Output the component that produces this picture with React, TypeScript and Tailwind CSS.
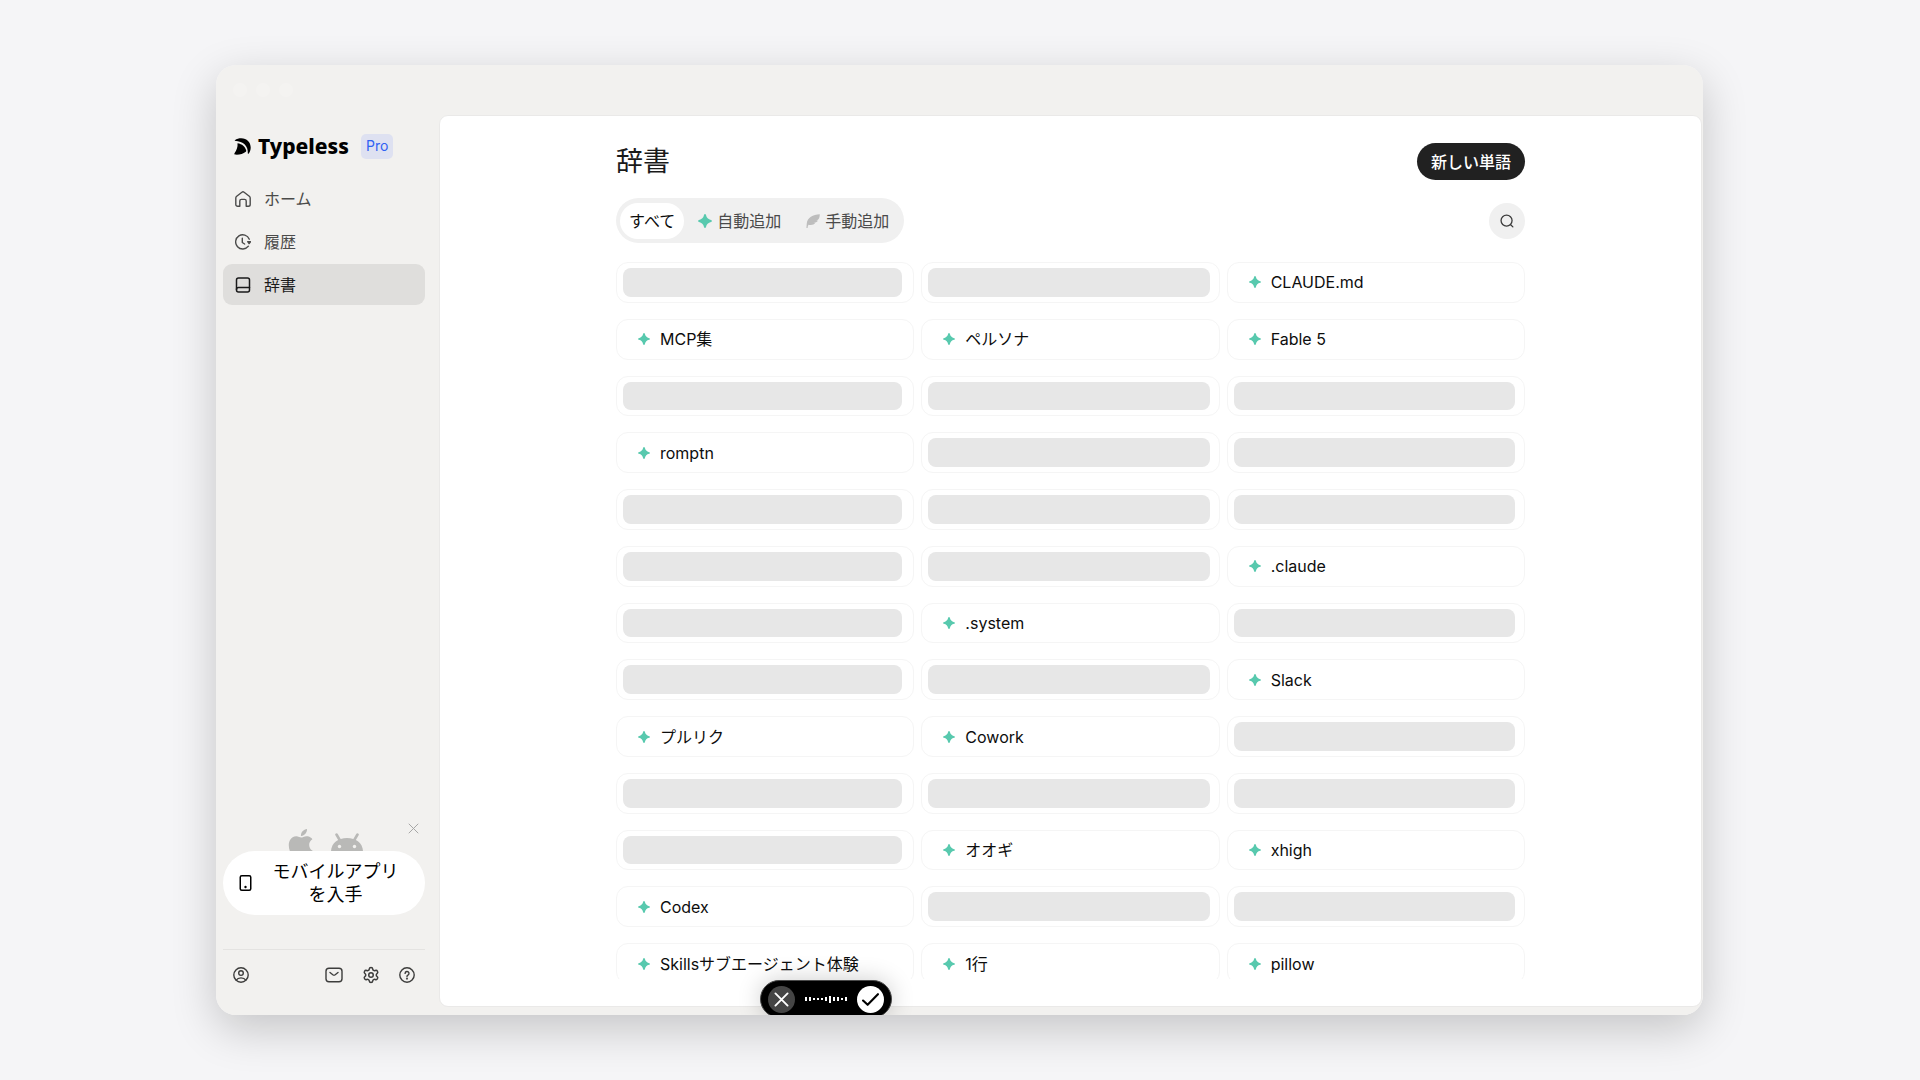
import { useState } from "react";
import clsx from "clsx";
import { Settings } from "lucide-react";

interface IconProps {
    className?: string;
}

interface Word {
    text: string;
}

// null entries are words whose text is hidden
const rows: (Word | null)[][] = [
    [null, null, { text: "CLAUDE.md" }],
    [{ text: "MCP集" }, { text: "ペルソナ" }, { text: "Fable 5" }],
    [null, null, null],
    [{ text: "romptn" }, null, null],
    [null, null, null],
    [null, null, { text: ".claude" }],
    [null, { text: ".system" }, null],
    [null, null, { text: "Slack" }],
    [{ text: "プルリク" }, { text: "Cowork" }, null],
    [null, null, null],
    [null, { text: "オオギ" }, { text: "xhigh" }],
    [{ text: "Codex" }, null, null],
    [{ text: "Skillsサブエージェント体験" }, { text: "1行" }, { text: "pillow" }],
];

const strokeProps = {
    viewBox: "0 0 16 16",
    fill: "none",
    stroke: "currentColor",
    strokeWidth: 1.4,
    strokeLinecap: "round" as const,
    strokeLinejoin: "round" as const,
    "aria-hidden": true,
};

function LogoMark({ className }: IconProps) {
    return (
        <svg viewBox="0 0 17 17" className={className} fill="currentColor" aria-hidden="true">
            <path d="M.8 2.200C2.800.8 4.900.2 7.200.2c5.600 0 9.500 4 9.500 9.300 0 2.300-.7 4.400-2 6.200l-.9-.1C14.500 8 9.500 3.300.8 2.700Z" />
            <path d="M3.500 5.200c4.600.7 7.900 3.500 8.700 7.400.1.500 0 .8-.4 1.100-2.800 2.200-6.400 3.200-10.600 2.900-.9-.1-1-.7-.7-1.300C2.500 12 4 9 3.500 5.200Z" />
        </svg>
    );
}

function HomeIcon({ className }: IconProps) {
    return (
        <svg {...strokeProps} className={className}>
            <path d="M.8 7.100c0-.8.3-1.400.9-1.900L6.900 1.200a1.800 1.800 0 0 1 2.200 0l5.200 4c.6.5.9 1.100.9 1.900v6.300a1.800 1.800 0 0 1-1.800 1.800h-2.200V10a1.600 1.600 0 0 0-1.600-1.600H6.400A1.600 1.600 0 0 0 4.800 10v5.200H2.600A1.800 1.800 0 0 1 .8 13.400Z" />
        </svg>
    );
}

function HistoryIcon({ className }: IconProps) {
    return (
        <svg {...strokeProps} className={className}>
            <path d="M13.400 12.200A7.100 7.100 0 1 1 14.300 5.200" />
            <path d="M7.300 4.300v4.200l2.300 1.500" />
            <path d="M12.700 7.700h2.800l-1.400 1.900Z" fill="currentColor" />
        </svg>
    );
}

function BookIcon({ className }: IconProps) {
    return (
        <svg {...strokeProps} strokeWidth={1.5} className={className}>
            <rect x="1.500" y=".9" width="13" height="14.200" rx="2" />
            <path d="M1.500 12.600c0-1.400.7-2.100 2-2.100h11" />
        </svg>
    );
}

function SparkIcon({ className }: IconProps) {
    return (
        <svg viewBox="0 0 14 14" className={className} fill="#58c9ae" aria-hidden="true">
            <path d="M7 0c.5 0 .8.4 1 1 .7 2.900 2.100 4.300 5 5 .6.2 1 .5 1 1s-.4.8-1 1c-2.900.7-4.300 2.100-5 5-.2.6-.5 1-1 1s-.8-.4-1-1c-.7-2.900-2.100-4.300-5-5-.6-.2-1-.5-1-1s.4-.8 1-1c2.900-.7 4.300-2.100 5-5 .2-.6.500-1 1-1Z" />
        </svg>
    );
}

function FeatherIcon({ className }: IconProps) {
    return (
        <svg viewBox="0 0 14 14" className={className} fill="#bdbdbd" aria-hidden="true">
            <path d="M13.800.2C7 .6 1.400 3.600.8 9.200L.4 14h1.200c0-1.200.3-2.200.9-3.200 1.700.4 3.900.3 5.500-.5l1.200-1.200-2-.2c2.200-.2 3.900-1 4.900-2.200l-1.700-.3c1.500-.4 2.400-1.200 2.800-2.300.4-1.200.6-2.500.6-3.900Z" />
        </svg>
    );
}

function SearchIcon({ className }: IconProps) {
    return (
        <svg {...strokeProps} strokeWidth={1.5} className={className}>
            <circle cx="7.500" cy="7.500" r="6.300" />
            <path d="m12.200 12.200 2.500 2.500" />
        </svg>
    );
}

function CloseIcon({ className }: IconProps) {
    return (
        <svg {...strokeProps} className={className}>
            <path d="M1.500 1.500l13 13M14.500 1.500l-13 13" />
        </svg>
    );
}

function AppleIcon({ className }: IconProps) {
    return (
        <svg viewBox="0 0 24 24" className={className} fill="#b9b9b7" aria-hidden="true">
            <path d="M12.152 6.896c-.948 0-2.415-1.078-3.960-1.040-2.040.027-3.910 1.183-4.961 3.014-2.117 3.675-.546 9.103 1.519 12.090 1.013 1.454 2.208 3.090 3.792 3.039 1.520-.065 2.090-.987 3.935-.987 1.831 0 2.350.987 3.960.948 1.637-.026 2.676-1.480 3.676-2.948 1.156-1.688 1.636-3.325 1.662-3.415-.039-.013-3.182-1.221-3.220-4.857-.026-3.040 2.480-4.494 2.597-4.559-1.429-2.090-3.623-2.324-4.390-2.376-2-.156-3.675 1.090-4.610 1.090zM15.530 3.830c.843-1.012 1.400-2.427 1.245-3.830-1.207.052-2.662.805-3.532 1.818-.780.896-1.454 2.338-1.273 3.714 1.338.104 2.715-.688 3.559-1.701" />
        </svg>
    );
}

function AndroidIcon({ className }: IconProps) {
    return (
        <svg viewBox="0 0 32 18" className={className} aria-hidden="true">
            <path d="M5.500 1.500 9 7.500M26.500 1.500 23 7.500" stroke="#b9b9b7" strokeWidth="2.600" strokeLinecap="round" />
            <path d="M0 18C.5 10 7 5 16 5s15.500 5 16 13Z" fill="#b9b9b7" />
            <circle cx="8.500" cy="13.500" r="1.700" fill="#f2f1ef" />
            <circle cx="23.500" cy="13.500" r="1.700" fill="#f2f1ef" />
        </svg>
    );
}

function PhoneIcon({ className }: IconProps) {
    return (
        <svg viewBox="0 0 12 16" className={className} fill="none" stroke="currentColor" strokeWidth="1.500" aria-hidden="true">
            <rect x=".75" y=".75" width="10.500" height="14.500" rx="1.500" />
            <circle cx="6" cy="12" r="1.200" fill="currentColor" stroke="none" />
        </svg>
    );
}

function UserIcon({ className }: IconProps) {
    return (
        <svg {...strokeProps} className={className}>
            <circle cx="8" cy="8" r="7.200" />
            <circle cx="8" cy="6.100" r="2.300" />
            <path d="M3.200 13.200C4.300 11.500 5.800 10.900 8 10.900s3.700.6 4.800 2.300" />
        </svg>
    );
}

function MailIcon({ className }: IconProps) {
    return (
        <svg viewBox="0 0 18 16" className={className} fill="none" stroke="currentColor" strokeWidth="1.400" strokeLinecap="round" strokeLinejoin="round" aria-hidden="true">
            <rect x="1" y="1.300" width="16" height="13.400" rx="3" />
            <path d="M5 5.500 7.800 7.700a2 2 0 0 0 2.400 0L13 5.500" />
        </svg>
    );
}

function HelpIcon({ className }: IconProps) {
    return (
        <svg {...strokeProps} className={className}>
            <circle cx="8" cy="8" r="7.200" />
            <path d="M6.100 6.400a1.950 1.950 0 1 1 2.900 1.700c-.7.400-1 .7-1 1.300" />
            <circle cx="8" cy="11.600" r=".4" fill="currentColor" />
        </svg>
    );
}

const navItems = [
    { label: "ホーム", icon: HomeIcon },
    { label: "履歴", icon: HistoryIcon },
    { label: "辞書", icon: BookIcon },
];

function Sidebar() {
    return (
        <aside className="flex w-[223px] shrink-0 flex-col pr-[14px] pl-[7px]">
            <div className="mt-[18px] flex h-[26px] items-center pl-[11px]">
                <LogoMark className="size-[17px]" />
                <span className="ml-[7px] font-['Noto_Sans',sans-serif] text-[21px] leading-6 font-extrabold text-black">Typeless</span>
                <span className="ml-3 flex h-[25px] items-center rounded-[5px] bg-[#dee1f1] px-[5px] text-sm text-[#2f62f3]">Pro</span>
            </div>
            <nav className="mt-[19px] flex flex-col gap-[2px]">
                {navItems.map(({ label, icon: Icon }) => {
                    const active = label === "辞書";
                    return (
                        <a
                            key={label}
                            href="#"
                            className={clsx(
                                "flex h-[41px] items-center gap-[13px] rounded-[9px] pl-3 text-base",
                                active ? "bg-[#dfdedc] text-[#1a1a1a]" : "text-[#4b4b4a]"
                            )}
                        >
                            <Icon className="size-4" />
                            <span>{label}</span>
                        </a>
                    );
                })}
            </nav>

            <div className="relative mt-auto flex h-7 items-end justify-center gap-[15px] overflow-hidden">
                <AppleIcon className="-mb-2 size-[30px] shrink-0" />
                <AndroidIcon className="h-[18px] w-8 shrink-0" />
                <button aria-label="閉じる" className="absolute top-0 right-[6px] text-[#a3a3a2]">
                    <CloseIcon className="size-[11px]" />
                </button>
            </div>
            <button className="flex h-16 items-center rounded-full bg-white pl-4 text-lg leading-[23px] text-black">
                <PhoneIcon className="h-4 w-[13px] shrink-0" />
                <span className="flex-1 pr-[17px] pl-[11px]">
                    モバイルアプリ
                    <br />
                    を入手
                </span>
            </button>
            <div className="mt-[34px] mb-[31px] flex items-center gap-[19px] border-t border-[#e4e3e1] px-[10px] pt-4 text-[#3d3d3c]">
                <button aria-label="アカウント" className="mr-auto">
                    <UserIcon className="size-4" />
                </button>
                <button aria-label="メール">
                    <MailIcon className="h-4 w-[18px]" />
                </button>
                <button aria-label="設定">
                    <Settings className="size-[18px]" strokeWidth={2} />
                </button>
                <button aria-label="ヘルプ">
                    <HelpIcon className="size-4" />
                </button>
            </div>
        </aside>
    );
}

function WordCard({ word, first }: { word: Word | null; first: boolean }) {
    if (!word) {
        return (
            <li className={clsx("rounded-xl border border-[#f5f5f5] py-[5px] pl-[6px]", first ? "pr-[11px]" : "pr-[9px]")}>
                <div className="h-full rounded-lg bg-[#e7e7e7]" />
            </li>
        );
    }
    return (
        <li className="flex items-center gap-[10px] rounded-xl border border-[#f5f5f5] pl-[21px] text-base text-[#0d0d0d]">
            <SparkIcon className="size-3 shrink-0" />
            <span className="whitespace-nowrap">{word.text}</span>
        </li>
    );
}

const filters = [
    { label: "すべて", icon: null },
    { label: "自動追加", icon: SparkIcon },
    { label: "手動追加", icon: FeatherIcon },
];

const levels = ["h-1", "h-1", "h-[2px]", "h-[2px]", "h-[2px]", "h-1", "h-[7px]", "h-1", "h-1", "h-[2px]", "h-1"];

function Recorder() {
    return (
        <div className="absolute bottom-[-3px] left-[544px] flex h-[38px] w-[132px] items-center justify-between rounded-full border border-[#4a4a4a] bg-black px-[7px] shadow-[0_0_24px_rgba(0,0,0,0.2)]">
            <button aria-label="キャンセル" className="flex size-[27px] items-center justify-center rounded-full bg-[#454545] text-white">
                <CloseIcon className="size-[15px] stroke-2" />
            </button>
            <div className="flex items-center gap-[2px]">
                {levels.map((h, i) => (
                    <span key={i} className={clsx("w-[2px] bg-white", h)} />
                ))}
            </div>
            <button aria-label="確定" className="flex size-[27px] items-center justify-center rounded-full bg-white text-black">
                <svg {...strokeProps} className="size-[17px] stroke-2">
                    <path d="m1 9 4.300 4L15 3" />
                </svg>
            </button>
        </div>
    );
}

export default function App() {
    const [filter, setFilter] = useState("すべて");

    return (
        <div className="min-h-screen bg-[#f5f5f7] py-[65px] pr-[217px] pl-[216px] font-[Inter,'Noto_Sans_CJK_JP',sans-serif]">
            <div className="rounded-[20px] shadow-[0_14px_45px_rgba(0,0,0,0.2)]">
                <div className="relative flex flex-col overflow-hidden rounded-[20px] bg-[#f2f1ef]">
                    <div className="flex h-[50px] items-center gap-[9px] pl-[17px]">
                        <span className="size-[14px] rounded-full bg-[#f4f3f1]" />
                        <span className="size-[14px] rounded-full bg-[#f4f3f1]" />
                        <span className="size-[14px] rounded-full bg-[#f4f3f1]" />
                    </div>
                    <div className="flex">
                        <Sidebar />
                        <main className="mr-px mb-2 flex flex-1 justify-center rounded-[9px] border border-[#eae9e8] bg-white px-8 pb-[27px]">
                            <div className="w-full max-w-[909px]">
                                <div className="mt-[27px] flex h-[37px] items-center justify-between">
                                    <h1 className="text-[27px] leading-9 text-[#1a1a1a]">辞書</h1>
                                    <button className="h-[37px] rounded-full bg-[#212121] px-[14px] text-base font-medium text-white">新しい単語</button>
                                </div>
                                <div className="mt-[18px] flex items-center justify-between">
                                    <div className="flex h-[45px] items-center rounded-full bg-[#f0f0f0] px-1">
                                        {filters.map(({ label, icon: Icon }) => (
                                            <button
                                                key={label}
                                                onClick={() => setFilter(label)}
                                                className={clsx(
                                                    "flex h-9 items-center gap-[5px] rounded-full text-base",
                                                    Icon ? "pr-[11px] pl-[14px]" : "px-[9px]",
                                                    filter === label ? "bg-white text-[#0d0d0d]" : "text-[#4a4a4a]"
                                                )}
                                            >
                                                {Icon && <Icon className="size-[14px]" />}
                                                {label}
                                            </button>
                                        ))}
                                    </div>
                                    <button aria-label="検索" className="flex size-9 items-center justify-center rounded-full bg-[#f0f0f0] text-[#3d3d3d]">
                                        <SearchIcon className="size-[14px]" />
                                    </button>
                                </div>
                                <div className="mt-[19px] h-[717px] overflow-hidden">
                                    <ul className="grid h-[722px] grid-cols-3 grid-rows-13 gap-x-[7px] gap-y-4">
                                        {rows.flat().map((word, i) => (
                                            <WordCard key={i} word={word} first={i % 3 === 0} />
                                        ))}
                                    </ul>
                                </div>
                            </div>
                        </main>
                    </div>
                    <Recorder />
                </div>
            </div>
        </div>
    );
}
